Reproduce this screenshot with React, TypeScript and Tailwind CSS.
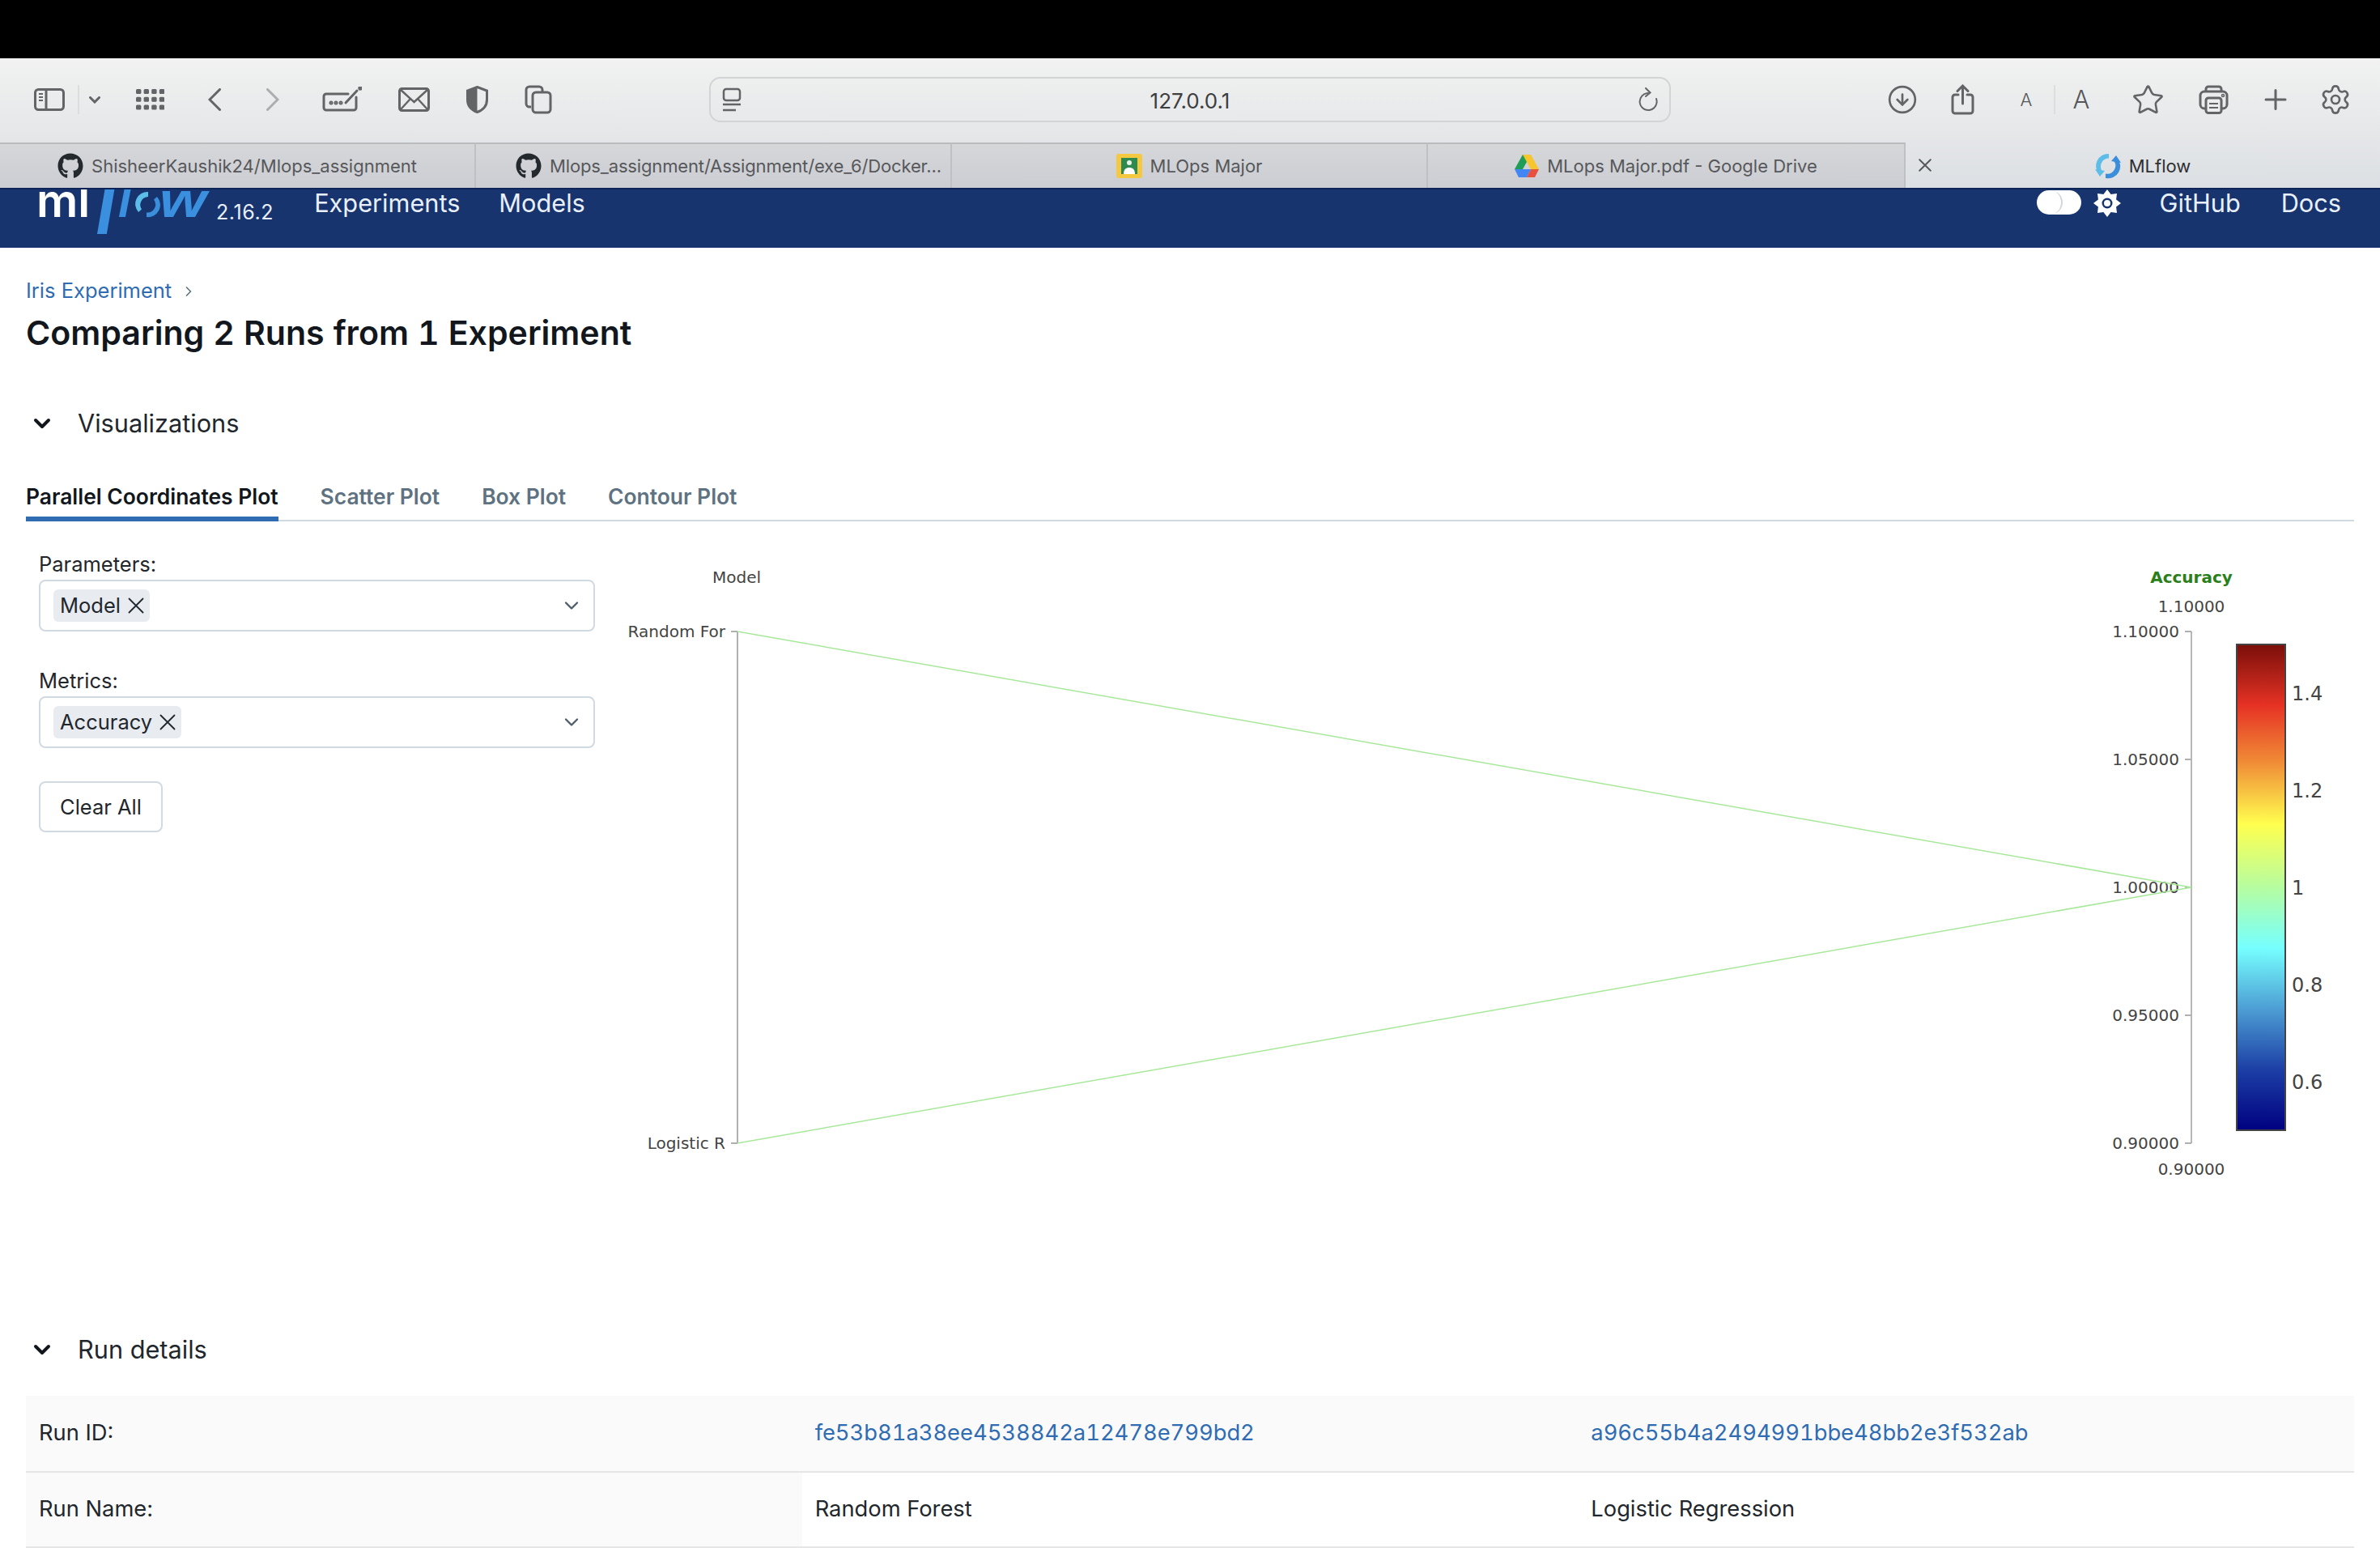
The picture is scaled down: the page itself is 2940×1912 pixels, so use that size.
import { CircleArrowDown, Settings, Star, ChevronDown, ChevronRight } from "lucide-react";
import { FaGithub } from "react-icons/fa";

const TOOL = "#636466";

function Sidebar() {
  return (
    <svg width="38" height="28" viewBox="0 0 38 28" fill="none" stroke={TOOL} strokeWidth="3">
      <rect x="1.5" y="1.5" width="35" height="25" rx="4" />
      <path d="M15 2v24" />
      <path d="M6 7h5M6 11h5M6 15h5" strokeWidth="2" />
    </svg>
  );
}

function Grid() {
  const dots = [];
  for (let r = 0; r < 3; r++) {
    for (let c = 0; c < 4; c++) {
      dots.push(<rect key={`${r}-${c}`} x={c * 9.6} y={r * 9.8} width="6.4" height="6" rx="1.5" fill={TOOL} />);
    }
  }
  return (
    <svg width="35" height="26" viewBox="0 0 35 26">
      {dots}
    </svg>
  );
}

function Compose() {
  return (
    <svg width="49" height="32" viewBox="0 0 49 32" fill="none" stroke={TOOL} strokeWidth="3" strokeLinecap="round">
      <path d="M32 9H5a3 3 0 0 0-3 3v14a3 3 0 0 0 3 3h34a3 3 0 0 0 3-3V13" />
      <path d="M29 20 43 5" />
      <circle cx="47" cy="2" r="1.2" />
      <circle cx="11" cy="20" r="1" />
      <circle cx="17" cy="20" r="1" />
      <circle cx="23" cy="20" r="1" />
    </svg>
  );
}

function Mail() {
  return (
    <svg width="39" height="30" viewBox="0 0 39 30" fill="none" stroke={TOOL} strokeWidth="3">
      <rect x="1.5" y="1.5" width="36" height="27" rx="3" />
      <path d="M3 3l16.5 15L36 3M3 27l12-13M36 27 24 14" strokeWidth="2.5" />
    </svg>
  );
}

function Shield() {
  return (
    <svg width="27" height="34" viewBox="0 0 27 34">
      <path d="M13.5 1.5 25.5 6v11c0 8-5 13-12 15.500C6.500 30 1.500 25 1.500 17V6z" fill="none" stroke={TOOL} strokeWidth="3" />
      <path d="M13.500 1.500 1.500 6v11c0 8 5 13 12 15.500z" fill={TOOL} />
    </svg>
  );
}

function Copies() {
  return (
    <svg width="34" height="36" viewBox="0 0 34 36" fill="none" stroke={TOOL} strokeWidth="3">
      <path d="M8 27H6a4 4 0 0 1-4-4V6a4 4 0 0 1 4-4h12a4 4 0 0 1 4 4v2" />
      <rect x="10" y="9" width="22" height="25" rx="4" />
    </svg>
  );
}

function Reader() {
  return (
    <svg width="24" height="30" viewBox="0 0 24 30" fill="none" stroke={TOOL} strokeWidth="2.500">
      <rect x="2" y="2" width="20" height="14" rx="3" />
      <path d="M1 21h22" />
      <path d="M1 28h16" />
    </svg>
  );
}

function Reload() {
  return (
    <svg width="24" height="30" viewBox="0 0 24 30" fill="none" stroke={TOOL} strokeWidth="2" strokeLinecap="round">
      <path d="M12 7A10.500 10.500 0 1 0 22 14" />
      <path d="M9 1l5.500 5.500L9 11" />
    </svg>
  );
}

function ShareIcon() {
  return (
    <svg width="29" height="38" viewBox="0 0 29 38" fill="none" stroke={TOOL} strokeWidth="3" strokeLinecap="round">
      <path d="M9 13H5a3 3 0 0 0-3 3v17a3 3 0 0 0 3 3h19a3 3 0 0 0 3-3V16a3 3 0 0 0-3-3h-4" />
      <path d="M14.500 24V3M8 8.500 14.500 2 21 8.500" />
    </svg>
  );
}

function Printer() {
  return (
    <svg width="37" height="36" viewBox="0 0 37 36" fill="none" stroke={TOOL} strokeWidth="3">
      <path d="M9 8V5a3 3 0 0 1 3-3h13a3 3 0 0 1 3 3v3" />
      <rect x="2" y="8" width="33" height="21" rx="5" />
      <rect x="9" y="16" width="19" height="18.500" rx="3" fill="#ebedee" />
      <path d="M13 23h11M13 28h11" strokeWidth="2" />
      <circle cx="30" cy="13" r="0.800" />
    </svg>
  );
}

function PlusIcon() {
  return (
    <svg width="28" height="26" viewBox="0 0 28 26" fill="none" stroke={TOOL} strokeWidth="3" strokeLinecap="round">
      <path d="M14 1.500v23M2 13h24" />
    </svg>
  );
}

function CloseX({ size, color, width }: { size: number; color: string; width: number }) {
  return (
    <svg width={size} height={size} viewBox="0 0 20 20" fill="none" stroke={color} strokeWidth={width} strokeLinecap="round">
      <path d="M1.500 1.500 18.500 18.500M18.500 1.500 1.500 18.500" />
    </svg>
  );
}

function Sep() {
  return <div className="h-[36px] w-[2px] bg-[#dcdddd]" />;
}

function MlflowMark({ size }: { size: number }) {
  return (
    <svg width={size} height={size} viewBox="0 0 32 32" fill="none">
      <path d="M17 1A15 15 0 0 0 5 26l4-3.500A10 10 0 0 1 17 6.500z" fill="#5dbde9" />
      <path d="M13 31A15 15 0 0 0 27 6l-4 3.500A10 10 0 0 1 13 25.500z" fill="#3a8edb" />
      <path d="M0 20l6 9 6-7z" fill="#5dbde9" />
      <path d="M32 12l-6-9-6 7z" fill="#3a8edb" />
    </svg>
  );
}

function ClassroomIcon() {
  return (
    <svg width="32" height="30" viewBox="0 0 32 30">
      <rect width="32" height="30" rx="3" fill="#f5c842" />
      <rect x="6" y="5" width="20" height="20" fill="#2f8a4f" />
      <circle cx="16" cy="11" r="3" fill="#e8f2e6" />
      <path d="M9 25c0-6 3-8 7-8s7 2 7 8z" fill="#fff" />
    </svg>
  );
}

function DriveIcon() {
  return (
    <svg width="30" height="28" viewBox="0 0 30 28">
      <path d="M10 0h10L10 18H0z" fill="#1f9d57" />
      <path d="M20 0l10 18H20L10 0z" fill="#f7c52d" />
      <path d="M0 18h20l-5 10H5z" fill="#4285f4" />
      <path d="M20 18h10l-5 10H15z" fill="#e8503f" />
    </svg>
  );
}

function BrowserTab({ icon, label, classes }: { icon: React.ReactNode; label: string; classes: string }) {
  return (
    <div className={`${classes} flex h-full items-center justify-center gap-[10px] border-r-2 border-t-2 border-r-[#bec0c4] border-t-[#b9bbbd] bg-gradient-to-b from-[#d5d7d9] to-[#cbcdd3]`}>
      {icon}
      <span className="text-[22px] text-[#57585b]">{label}</span>
    </div>
  );
}

function BrowserChrome() {
  return (
    <div className="bg-gradient-to-b from-[#f1f2f1] to-[#dcdfe3]">
      <div className="flex h-[104px] items-center pb-[2px] pl-[42px]">
        <Sidebar />
        <div className="ml-[16px]">
          <Sep />
        </div>
        <svg className="ml-[12px]" width="14" height="9" viewBox="0 0 14 9" fill="none" stroke={TOOL} strokeWidth="3" strokeLinecap="round">
          <path d="M1.500 1.500 7 7l5.500-5.500" />
        </svg>
        <div className="ml-[44px] flex">
          <Grid />
        </div>
        <svg className="ml-[54px]" width="16" height="28" viewBox="0 0 16 28" fill="none" stroke={TOOL} strokeWidth="3" strokeLinecap="round">
          <path d="M14.500 1.500 2 14l12.500 12.500" />
        </svg>
        <svg className="ml-[56px]" width="16" height="28" viewBox="0 0 16 28" fill="none" stroke="#acadae" strokeWidth="3" strokeLinecap="round">
          <path d="M1.500 1.500 14 14 1.500 26.500" />
        </svg>
        <div className="ml-[53px] flex">
          <Compose />
        </div>
        <div className="ml-[45px] flex">
          <Mail />
        </div>
        <div className="ml-[45px] flex">
          <Shield />
        </div>
        <div className="ml-[45px] flex">
          <Copies />
        </div>
        <div className="ml-[194px] flex h-[56px] w-[1188px] items-center justify-between rounded-[14px] border-2 border-[#d2d4d5] px-[14px]">
          <Reader />
          <span className="mt-[3px] text-[26px] text-[#3d3e40]">127.0.0.1</span>
          <Reload />
        </div>
        <CircleArrowDown className="ml-[267px]" size={38} color={TOOL} strokeWidth={1.7} />
        <div className="ml-[41px] flex">
          <ShareIcon />
        </div>
        <span className="ml-[56px] w-[16px] text-center text-[22px] font-light text-[#55565a]">A</span>
        <div className="ml-[26px]">
          <Sep />
        </div>
        <span className="ml-[21px] w-[22px] text-center text-[31px] font-light text-[#55565a]">A</span>
        <Star className="ml-[51px]" size={41} color={TOOL} strokeWidth={1.5} />
        <div className="ml-[42px] flex">
          <Printer />
        </div>
        <div className="ml-[44px] flex">
          <PlusIcon />
        </div>
        <Settings className="ml-[40px]" size={40} color={TOOL} strokeWidth={1.6} />
      </div>
      <div className="flex h-[56px]">
        <BrowserTab classes="w-[588px]" icon={<FaGithub size={32} color="#24292e" />} label="ShisheerKaushik24/Mlops_assignment" />
        <BrowserTab classes="w-[588px] pl-[38px] tracking-[-0.15px]" icon={<FaGithub size={32} color="#24292e" />} label="Mlops_assignment/Assignment/exe_6/Docker..." />
        <BrowserTab classes="w-[588px]" icon={<ClassroomIcon />} label="MLOps Major" />
        <BrowserTab classes="w-[590px]" icon={<DriveIcon />} label="MLops Major.pdf - Google Drive" />
        <div className="relative flex flex-1 items-center justify-center gap-[10px] pt-[2px]">
          <div className="absolute left-[16px] top-[20px] flex">
            <CloseX size={16} color="#55565a" width={2.4} />
          </div>
          <MlflowMark size={32} />
          <span className="text-[22px] text-[#2f3033]">MLflow</span>
        </div>
      </div>
    </div>
  );
}

function Logo() {
  return (
    <svg width="215" height="58" viewBox="0 0 215 58">
      <text x="-3" y="36" fill="#fff" fontFamily="Inter" fontSize="57" fontWeight="600">
        ml
      </text>
      <text x="72" y="38" fill="#3b8fdf" fontFamily="Liberation Serif" fontSize="90" fontStyle="italic" fontWeight="700">
        f
      </text>
      <text x="98" y="36" fill="#3b8fdf" fontFamily="Liberation Sans" fontSize="58" fontStyle="italic" fontWeight="700">
        l
      </text>
      <g transform="translate(120 5)">
        <path d="M15 0A15 15 0 0 0 3 25l4-3.500A10 10 0 0 1 15 6z" fill="#5dbde9" />
        <path d="M13 31A15 15 0 0 0 26 6l-4 3.500A10 10 0 0 1 13 25.500z" fill="#3a8edb" />
      </g>
      <text x="149" y="36" fill="#3b8fdf" fontFamily="Liberation Sans" fontSize="62" fontStyle="italic" fontWeight="700" textLength="58" lengthAdjust="spacingAndGlyphs">
        w
      </text>
    </svg>
  );
}

function SunIcon() {
  const pts = [];
  for (let i = 0; i < 16; i++) {
    const a = (i * Math.PI) / 8 - Math.PI / 2;
    const r = i % 2 === 0 ? 17 : 12;
    pts.push(`${17 + r * Math.cos(a)},${17 + r * Math.sin(a)}`);
  }
  return (
    <svg width="34" height="34" viewBox="0 0 34 34">
      <polygon points={pts.join(" ")} fill="#fff" />
      <circle cx="17" cy="17" r="6.500" fill="#17346f" />
      <circle cx="17" cy="17" r="4" fill="#fff" />
    </svg>
  );
}

function TopNav() {
  return (
    <div className="flex h-[74px] items-start overflow-hidden border-t-2 border-[#0d2459] bg-[#17346f] pl-[48px] pr-[48px] text-[30.700px] leading-[34px] text-[#e9f0fb]">
      <div className="-mt-[2px]">
        <Logo />
      </div>
      <span className="ml-[4px] mt-[12px] text-[25px] leading-[32px] tracking-[0.6px]">2.16.2</span>
      <span className="ml-[50px]">Experiments</span>
      <span className="ml-[48px]">Models</span>
      <div className="ml-auto mt-[1px] flex h-[30px] w-[55px] items-center rounded-full bg-white">
        <div className="h-[30px] w-[32px] rounded-full border-r-2 border-[#cfd6de]" />
      </div>
      <div className="ml-[15px] flex">
        <SunIcon />
      </div>
      <span className="ml-[48px]">GitHub</span>
      <span className="ml-[50px]">Docs</span>
    </div>
  );
}

function Chip({ label }: { label: string }) {
  return (
    <div className="flex h-[40px] items-center gap-[9px] rounded-[6px] bg-[#e8ecf1] pl-[8px] pr-[7px]">
      <span className="pt-[1px]">{label}</span>
      <CloseX size={20} color="#1f272d" width={1.8} />
    </div>
  );
}

function SelectBox({ label }: { label: string }) {
  return (
    <div className="mt-[3px] flex h-[64px] items-center justify-between rounded-[8px] border-2 border-[#d1d9e1] pl-[16px] pr-[13px]">
      <Chip label={label} />
      <ChevronDown size={28} strokeWidth={2} color="#4e5d6b" />
    </div>
  );
}

function SectionHeader({ title }: { title: string }) {
  return (
    <div className="flex h-[44px] items-center text-[30.700px] text-[#1f272d]">
      <ChevronDown className="ml-[4px]" size={32} strokeWidth={3} color="#11171c" />
      <span className="ml-[28px]">{title}</span>
    </div>
  );
}

const accuracyTicks = [
  { y: 780, t: "1.10000" },
  { y: 938, t: "1.05000" },
  { y: 1096, t: "1.00000" },
  { y: 1254, t: "0.95000" },
  { y: 1412, t: "0.90000" },
];

const scaleTicks = [
  { y: 856, t: "1.4" },
  { y: 976, t: "1.2" },
  { y: 1096, t: "1" },
  { y: 1216, t: "0.8" },
  { y: 1336, t: "0.6" },
];

// svg uses page coordinates through the viewBox
function ParallelPlot() {
  return (
    <svg width="2148" height="1000" viewBox="760 644 2148 1000" fontFamily="DejaVu Sans" fontSize="20" fill="#444">
      <defs>
        <linearGradient id="jet" x1="0" y1="0" x2="0" y2="1">
          <stop offset="0" stopColor="#7a0f0a" />
          <stop offset="0.125" stopColor="#e63224" />
          <stop offset="0.24" stopColor="#f08a36" />
          <stop offset="0.37" stopColor="#ffff4f" />
          <stop offset="0.5" stopColor="#b6fda0" />
          <stop offset="0.625" stopColor="#76ffff" />
          <stop offset="0.75" stopColor="#4d9ed4" />
          <stop offset="0.875" stopColor="#1c3fa5" />
          <stop offset="1" stopColor="#000080" />
        </linearGradient>
      </defs>

      <path d="M911 780V1412M903 780H911M903 1412H911" stroke="#b0b0b0" strokeWidth="2" fill="none" />
      <text x="910" y="720" textAnchor="middle">Model</text>
      <text x="896" y="787" textAnchor="end">Random For</text>
      <text x="896" y="1419" textAnchor="end">Logistic R</text>

      <path d="M2707 780V1412" stroke="#b8b8b8" strokeWidth="2" />
      {accuracyTicks.map((k) => (
        <g key={k.y}>
          <path d={`M2699 ${k.y}H2707`} stroke="#b0b0b0" strokeWidth="2" />
          <text x="2692" y={k.y + 7} textAnchor="end">{k.t}</text>
        </g>
      ))}
      <path d="M911 780 2707 1096 911 1412" stroke="#a8e89a" strokeWidth="1.500" fill="none" />

      <text x="2707" y="720" textAnchor="middle" fill="#2a7f1a" fontWeight="700">Accuracy</text>
      <text x="2707" y="756" textAnchor="middle">1.10000</text>
      <text x="2707" y="1451" textAnchor="middle">0.90000</text>

      <rect x="2763" y="796" width="60" height="600" fill="url(#jet)" stroke="#444" strokeWidth="2" />
      {scaleTicks.map((k) => (
        <text key={k.y} x="2831" y={k.y + 9} fontSize="24">{k.t}</text>
      ))}
    </svg>
  );
}

export default function App() {
  return (
    <div className="h-[1912px] overflow-hidden bg-white font-[Inter,sans-serif] text-[#1f272d]">
      <div className="h-[72px] bg-black" />
      <BrowserChrome />
      <TopNav />

      <div className="px-[32px]">
        <div className="mt-[37px] flex h-[32px] items-center text-[25.500px] text-[#2f6cb2]">
          Iris Experiment
          <ChevronRight className="ml-[11px] mt-[2px]" size={20} color="#5f7281" />
        </div>
        <h1 className="mt-[10px] h-[52px] text-[41.100px] font-semibold leading-[52px] tabular-nums text-[#11171c]">
          Comparing 2 Runs from 1 Experiment
        </h1>

        <div className="mt-[64px]">
          <SectionHeader title="Visualizations" />
        </div>

        <div className="mt-[35px] flex h-[64px] items-start gap-[52px] border-b-2 border-[#d1d9e1] pt-[17px] text-[26.400px] font-semibold leading-[32px] text-[#5f7281]">
          <div className="-mb-[2px] h-[47px] border-b-[6px] border-[#2f6cb2] text-[#11171c]">Parallel Coordinates Plot</div>
          <div>Scatter Plot</div>
          <div>Box Plot</div>
          <div>Contour Plot</div>
        </div>

        <div className="flex h-[1002px] text-[25.500px]">
          <div className="w-[703px] pl-[16px] pt-[37px]">
            <div className="h-[32px] leading-[32px]">Parameters:</div>
            <SelectBox label="Model" />
            <div className="mt-[45px] h-[32px] leading-[32px]">Metrics:</div>
            <SelectBox label="Accuracy" />
            <button className="mt-[41px] h-[63px] w-[153px] rounded-[8px] border-2 border-[#d1d9e1] bg-white pt-[2px]">Clear All</button>
          </div>
          <div className="ml-[25px]">
            <ParallelPlot />
          </div>
        </div>

        <div className="-mt-[1px]">
          <SectionHeader title="Run details" />
        </div>

        <div className="mt-[35px] text-[27.300px]">
          <div className="grid h-[95px] grid-cols-3 items-center border-b-2 border-[#e6e6e6] bg-[#fafafa] [&>*]:px-[16px]">
            <div>Run ID:</div>
            <div className="tabular-nums text-[#2f6cb2]">fe53b81a38ee4538842a12478e799bd2</div>
            <div className="tabular-nums text-[#2f6cb2]">a96c55b4a2494991bbe48bb2e3f532ab</div>
          </div>
          <div className="grid h-[93px] grid-cols-3 border-b-2 border-[#e6e6e6]">
            <div className="flex items-center bg-[#fafafa] px-[16px]">Run Name:</div>
            <div className="flex items-center px-[16px]">Random Forest</div>
            <div className="flex items-center px-[16px]">Logistic Regression</div>
          </div>
        </div>
      </div>
    </div>
  );
}
